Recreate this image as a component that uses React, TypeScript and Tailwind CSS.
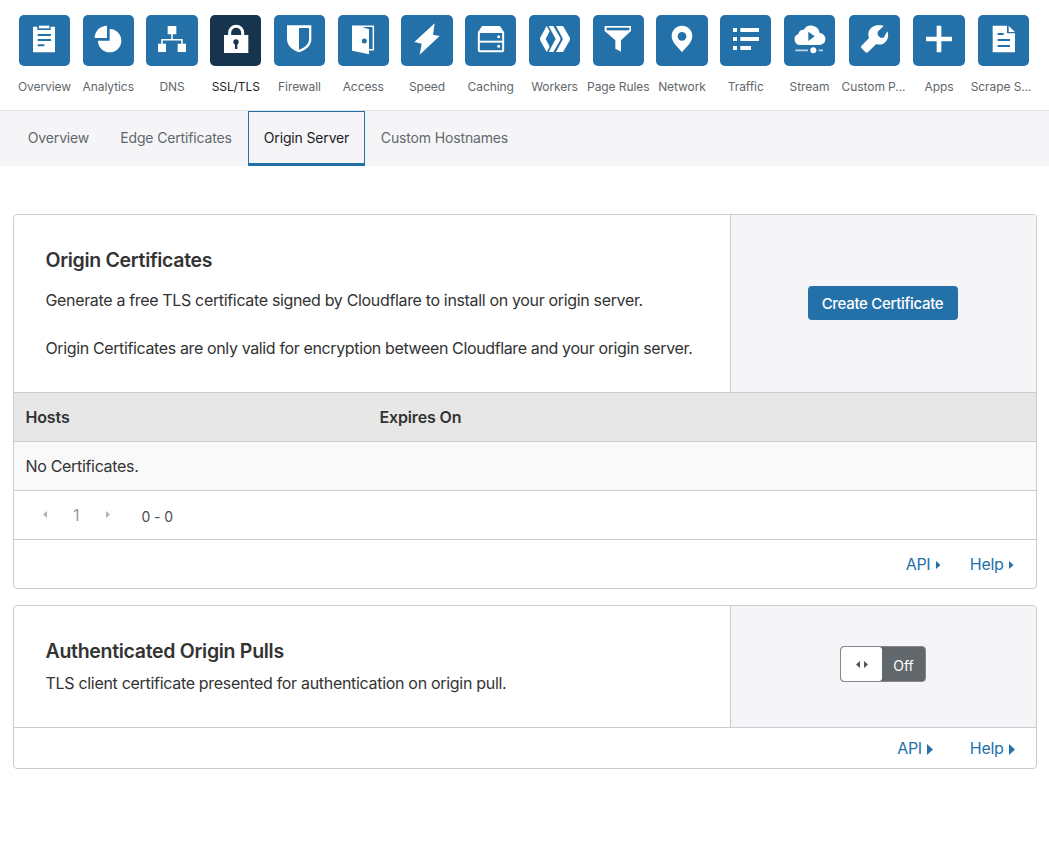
import type { ReactNode } from 'react';

const BLUE = '#2471a9';

type NavItem = { label: string; icon: ReactNode; wide?: boolean; active?: boolean; labelClass?: string };

const navItems: NavItem[] = [
  {
    label: 'Overview',
    icon: (
      <>
        <path d="M42 35H55V45H95V35H108V112H42Z" />
        <path d="M60 32H91V40H60Z" />
        <path d="M56 60H96M56 75H96M56 91H76" stroke={BLUE} strokeWidth="6" />
      </>
    ),
  },
  {
    label: 'Analytics',
    icon: (
      <>
        <path d="M80 42A35 35 0 1 1 45 77H80Z" />
        <path d="M72 32V69H35A37 37 0 0 1 72 32Z" />
      </>
    ),
  },
  {
    label: 'DNS',
    icon: (
      <>
        <path d="M65 33H91V58H65ZM36 86H60V111H36ZM95 86H120V111H95Z" />
        <path d="M78 56V74M48 88V74H108V88" fill="none" stroke="white" strokeWidth="4.5" />
      </>
    ),
  },
  {
    label: 'SSL/TLS',
    active: true,
    icon: (
      <>
        <path d="M42 60H115V114H42Z" />
        <path d="M59 62V53A19.5 19.5 0 0 1 98 53V62" fill="none" stroke="white" strokeWidth="9" />
        <circle cx="78" cy="81" r="8" fill="#16344d" />
        <path d="M75 83H82V102H75Z" fill="#16344d" />
      </>
    ),
  },
  {
    label: 'Firewall',
    icon: (
      <>
        <path d="M39 31H112V72C112 90 99 104 75 112C52 104 39 90 39 72Z" />
        <path d="M75 39H105V72C105 86 95 97 75 104Z" fill={BLUE} />
      </>
    ),
  },
  {
    label: 'Access',
    icon: (
      <>
        <path d="M44 34H106V104H92" fill="none" stroke="white" strokeWidth="4.5" />
        <path d="M42 32L70 35L93 43V118L42 107Z" />
        <circle cx="79" cy="78" r="7.5" fill={BLUE} />
      </>
    ),
  },
  {
    label: 'Speed',
    icon: <path d="M101 25L40 81L62 86L56 119L116 63L96 59Z" />,
  },
  {
    label: 'Caching',
    icon: (
      <>
        <path d="M51 33H105L117 52H39Z" />
        <rect x="41.5" y="51" width="73" height="58" rx="3" fill="none" stroke="white" strokeWidth="6" />
        <path d="M41 80H115" stroke="white" strokeWidth="6" />
        <circle cx="101" cy="65" r="4.5" />
        <circle cx="101" cy="94" r="4.5" />
      </>
    ),
  },
  {
    label: 'Workers',
    icon: (
      <>
        <path d="M53 33L62 49L50 72L62 95L53 111L33 75V69Z" />
        <path d="M59 33H73L94 69V75L73 111H59L80 72Z" />
        <path d="M81 33H102L123 69V75L102 111H81L102 72Z" />
      </>
    ),
  },
  {
    label: 'Page Rules',
    icon: (
      <>
        <path d="M35 33H114V48L84 76V110L67 101V76L35 48Z" />
        <path d="M41 38H109V46H41Z" fill={BLUE} />
      </>
    ),
  },
  {
    label: 'Network',
    icon: (
      <>
        <path d="M78 32C95 32 109 45 109 63C109 83 90 96 78 112C66 96 47 83 47 63C47 45 61 32 78 32Z" />
        <circle cx="78" cy="64" r="13" fill={BLUE} />
      </>
    ),
  },
  {
    label: 'Traffic',
    icon: <path d="M39 39H51V51H39ZM61 39H117V51H61ZM39 66H51V78H39ZM61 66H117V78H61ZM39 93H51V105H39ZM61 93H93V105H61Z" />,
  },
  {
    label: 'Stream',
    icon: (
      <>
        <path d="M48 90A17 17 0 0 1 43 57A15 15 0 0 1 59 44A26 26 0 0 1 107 54A18 18 0 0 1 106 90Z" />
        <path d="M73 50L92 64L73 78Z" fill={BLUE} />
        <path d="M34 106H72M104 106H117" stroke="white" strokeOpacity=".7" strokeWidth="5" />
        <circle cx="88" cy="106" r="9" />
      </>
    ),
  },
  {
    label: 'Custom P...',
    wide: true,
    labelClass: 'pr-[1.5px]',
    icon: (
      <path d="M104 33L86 50V60L94 68H104L115 49C121 63 116 79 103 86C95 90 88 89 82 87L57 111Q53 115 49 111L37 99Q34 96 37 93L60 69C55 58 59 43 70 36C80 29 95 28 104 33Z" />
    ),
  },
  {
    label: 'Apps',
    icon: <path d="M71 32H85V65H117V79H85V112H71V79H39V65H71Z" />,
  },
  {
    label: 'Scrape S...',
    wide: true,
    labelClass: 'pr-[5.5px]',
    icon: (
      <>
        <path d="M44 32H87V55H111V112H44ZM92 32L111 51H92Z" />
        <path d="M59 57H77M59 75H96M59 93H96" stroke={BLUE} strokeWidth="6" />
      </>
    ),
  },
];

type CaretSize = 'sm' | 'md' | 'lg';

const caretSizes: Record<CaretSize, string> = {
  sm: 'h-[7px] w-[4px]',
  md: 'h-[8px] w-[4.5px]',
  lg: 'h-[11px] w-[6px]',
};

function Caret({ left = false, size = 'sm', className = '' }: { left?: boolean; size?: CaretSize; className?: string }) {
  return (
    <svg viewBox="0 0 6 10" className={`${caretSizes[size]} ${className}`} preserveAspectRatio="none" fill="currentColor">
      <path d={left ? 'M6 0V10L0 5Z' : 'M0 0V10L6 5Z'} />
    </svg>
  );
}

function FooterLink({ children, size = 'md' }: { children: string; size?: CaretSize }) {
  return (
    <a className="flex items-center text-[#2471a9]">
      <span className="tracking-[-0.3px]">{children}</span>
      <Caret size={size} className="ml-[5.5px] mt-[2px]" />
    </a>
  );
}

export default function App() {
  return (
    <div className="h-[846px] w-[1049px] overflow-hidden bg-white font-['Inter',sans-serif] text-base text-[#333]">
      <nav className="flex h-[110px] pl-[12.625px] pt-[15px]">
        {navItems.map((item) => (
          <a key={item.label} className={`flex shrink-0 flex-col items-center ${item.wide ? 'w-[65.8px]' : 'w-[63.75px]'}`}>
            <span className={`block h-[51px] w-[51.35px] rounded-[5px] ${item.active ? 'bg-[#16344d]' : 'bg-[#2471a9]'}`}>
              <svg viewBox="0 0 153 153" className="size-[51px]" fill="white">
                {item.icon}
              </svg>
            </span>
            <span className={`mt-[12px] whitespace-nowrap text-[12px] leading-[18px] tracking-[-0.08px] ${item.labelClass ?? ''} ${item.active ? 'text-[#222]' : 'text-[#62676b]'}`}>
              {item.label}
            </span>
          </a>
        ))}
      </nav>

      <div className="flex h-[56px] border-t border-[#e0e1e3] bg-[#f5f5f7] pl-[12px] text-[14px] tracking-[-0.15px] text-[#62676b]">
        <a className="flex w-[92px] items-center justify-center border-b border-transparent pb-px pl-px">Overview</a>
        <a className="flex w-[144px] items-center justify-center border-b border-transparent pb-px">Edge Certificates</a>
        <a className="flex w-[117px] items-center justify-center border border-b-[3px] border-[#2471a9] text-[#222]">Origin Server</a>
        <a className="flex w-[159px] items-center justify-center border-b border-transparent pb-px">Custom Hostnames</a>
      </div>

      <main className="px-[13px] pt-[48px]">
        <section className="w-[1024px] overflow-hidden rounded-[4px] border border-[#cbcccd]">
          <div className="flex h-[177px]">
            <div className="w-[716px] shrink-0 pl-[31.5px] pt-[32px]">
              <h2 className="text-[19.5px] font-semibold leading-[26px] tracking-[-0.31px]">Origin Certificates</h2>
              <p className="mt-[15px] whitespace-nowrap leading-6 tracking-[-0.34px]">
                Generate a free TLS certificate signed by Cloudflare to install on your origin server.
              </p>
              <p className="mt-6 whitespace-nowrap leading-6 tracking-[-0.37px]">
                Origin Certificates are only valid for encryption between Cloudflare and your origin server.
              </p>
            </div>
            <div className="flex grow items-center justify-center border-l border-[#cbcccd] bg-[#f5f5f7] pb-px pr-[2px]">
              <button className="h-[34px] w-[150px] rounded-[4px] bg-[#2471a9] pt-[2px] text-[15px] font-medium tracking-[-0.3px] text-white">
                Create Certificate
              </button>
            </div>
          </div>
          <div className="flex h-[49px] items-center border-t border-[#cbcccd] bg-[#e7e7e7] pl-[11.5px] font-semibold tracking-[-0.15px]">
            <span className="w-[354px]">Hosts</span>
            <span>Expires On</span>
          </div>
          <div className="flex h-[49px] items-center border-t border-[#cbcccd] bg-[#f9f9f9] pl-[11.5px] tracking-[-0.32px]">No Certificates.</div>
          <div className="flex h-[49px] items-center border-t border-[#cbcccd] pl-[29px]">
            <Caret left className="mb-[2px] text-[#b5b5b5]" />
            <span className="ml-[26px] w-[10px] text-[#999]">1</span>
            <Caret className="mb-[2px] ml-[23px] text-[#b5b5b5]" />
            <span className="ml-[31.5px] mt-[2px] text-[14px] tracking-[-0.1px] text-[#4d4d4d]">0 - 0</span>
          </div>
          <div className="flex h-[49px] items-center justify-end gap-[29.5px] border-t border-[#cbcccd] pr-[22.5px]">
            <FooterLink>API</FooterLink>
            <FooterLink>Help</FooterLink>
          </div>
        </section>

        <section className="mt-[16px] w-[1024px] overflow-hidden rounded-[4px] border border-[#cbcccd]">
          <div className="flex h-[121px]">
            <div className="w-[716px] shrink-0 pl-[31.5px] pt-[32px]">
              <h2 className="text-[19.5px] font-semibold leading-[26px] tracking-[-0.3px]">Authenticated Origin Pulls</h2>
              <p className="mt-[7px] whitespace-nowrap leading-6 tracking-[-0.305px]">
                TLS client certificate presented for authentication on origin pull.
              </p>
            </div>
            <div className="flex grow items-center justify-center border-l border-[#cbcccd] bg-[#f5f5f7] pb-[5px] pr-[2px]">
              <button className="flex h-[36px] w-[86px] overflow-hidden rounded-[4px] border border-[#85888b] bg-[#62676b]">
                <span className="flex h-full w-[41px] items-center justify-center gap-[4px] rounded-[3px] bg-white pl-[2px] text-[#555]">
                  <Caret left />
                  <Caret />
                </span>
                <span className="flex h-full grow items-center justify-center pl-px pt-[2px] text-[14px] text-white">Off</span>
              </button>
            </div>
          </div>
          <div className="flex h-[41px] items-center justify-end gap-[36.5px] border-t border-[#cbcccd] pr-[21px]">
            <FooterLink size="lg">API</FooterLink>
            <FooterLink size="lg">Help</FooterLink>
          </div>
        </section>
      </main>
    </div>
  );
}
